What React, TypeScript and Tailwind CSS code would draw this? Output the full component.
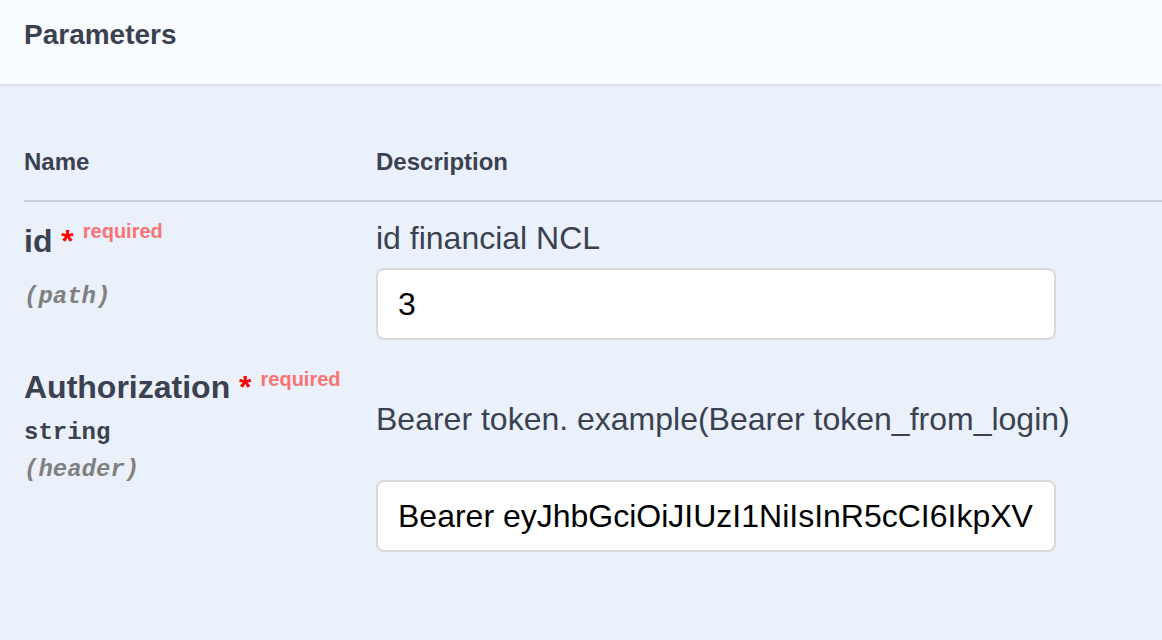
import React from "react";

type Param = {
  name: string;
  type?: string;
  location: string;
  description: string;
  value: string;
  requiredOffset: string;
};

const params: Param[] = [
  {
    name: "id",
    location: "(path)",
    description: "id financial NCL",
    value: "3",
    requiredOffset: "-top-[14px]",
  },
  {
    name: "Authorization",
    type: "string",
    location: "(header)",
    description: "Bearer token. example(Bearer token_from_login)",
    value:
      "Bearer eyJhbGciOiJIUzI1NiIsInR5cCI6IkpXVCJ9.eyJzdWIiOiIxMjM0NTY3ODkwIn0.token",
    requiredOffset: "-top-[12px]",
  },
];

function ParamInput({ value }: { value: string }) {
  return (
    <input
      type="text"
      readOnly
      defaultValue={value}
      className="block h-[72px] w-[680px] rounded-[8px] border-2 border-[#d9d9d9] bg-white px-[20px] text-[32px] leading-[36px] text-black outline-none font-['Liberation_Sans',Arial,sans-serif]"
    />
  );
}

export default function App() {
  return (
    <div className="h-[640px] w-full overflow-hidden bg-[#eaf1fa] text-[#3b4151] font-['Liberation_Sans',Arial,sans-serif]">
      {/* section header */}
      <div className="relative z-10 h-[84px] bg-[#f9fcfe] px-6 pt-[18px] shadow-[0_1px_3px_rgba(0,0,0,0.12)]">
        <h4 className="text-[28px] font-bold leading-[34px]">Parameters</h4>
      </div>

      <div className="pl-6">
        {/* table head */}
        <div className="grid grid-cols-[352px_1fr] border-b-2 border-[#c8ced8] pt-[63px] pb-[23px] text-[24px] font-bold leading-[30px]">
          <div>Name</div>
          <div>Description</div>
        </div>

        {/* rows */}
        {params.map((p, i) => (
          <div key={p.name} className={`grid grid-cols-[352px_1fr] pt-[19px] ${i === 0 ? "pb-[8px]" : ""}`}>
            <div>
              <div className="text-[32px] font-bold leading-[40px] whitespace-nowrap">
                {p.name} <span className="text-[#ff0000]">*</span>
                <span className={`relative ${p.requiredOffset} ml-[9px] text-[20px] font-bold text-[#f87474]`}>
                  required
                </span>
              </div>
              {p.type && (
                <div className="mt-[7px] text-[24px] font-bold leading-[30px] font-['Liberation_Mono','Courier_New',monospace]">
                  {p.type}
                </div>
              )}
              <div
                className={`${p.type ? "mt-[7px]" : "mt-[17px]"} text-[24px] font-bold italic leading-[30px] text-[#808080] font-['Liberation_Mono','Courier_New',monospace]`}
              >
                {p.location}
              </div>
            </div>
            <div className={i === 0 ? "-mt-[3px]" : "pt-[32px]"}>
              <p className="text-[32px] leading-[40px]">{p.description}</p>
              <div className={i === 0 ? "mt-[10px]" : "mt-[41px]"}>
                <ParamInput value={p.value} />
              </div>
            </div>
          </div>
        ))}
      </div>
    </div>
  );
}
